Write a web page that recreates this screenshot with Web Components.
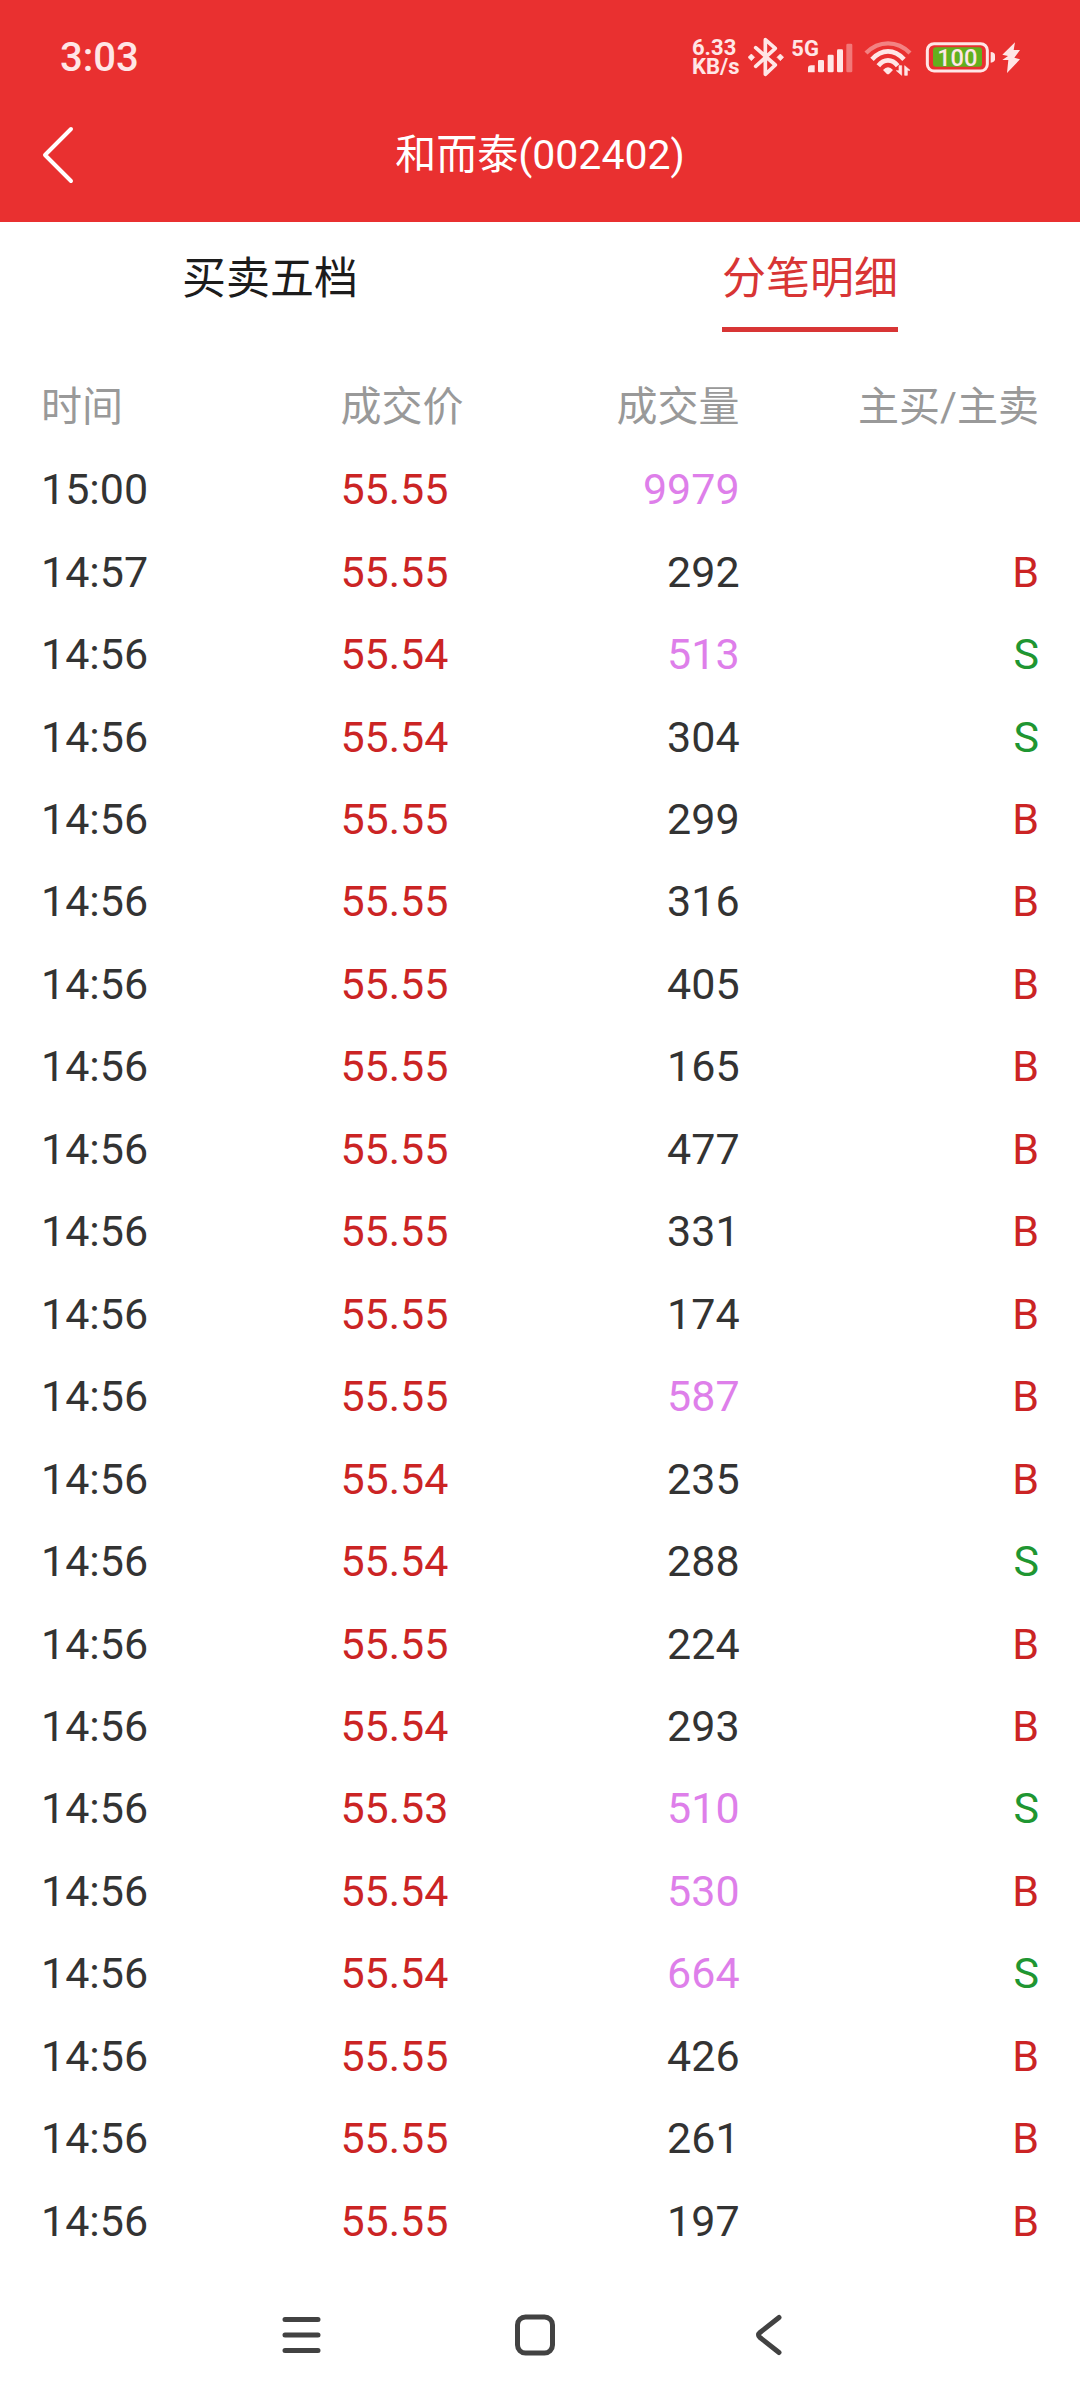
<!DOCTYPE html>
<html lang="zh-CN">
<head>
<meta charset="UTF-8">
<meta name="viewport" content="width=device-width, initial-scale=1.0">
<title>和而泰(002402)</title>
<style>
    body {
        margin: 0;
        min-height: 100vh;
        display: flex;
        flex-direction: column;
        background: #fff;
        color: #333;
        font-family: Roboto, "Noto Sans CJK SC", sans-serif;
        --brand: #e93030;
    }
    trade-table {
        flex: 1;
    }
</style>
</head>
<body>
    <status-bar time="3:03"></status-bar>
    <page-header>和而泰(002402)</page-header>
    <tab-bar>
        <tab-item>买卖五档</tab-item>
        <tab-item selected>分笔明细</tab-item>
    </tab-bar>
    <trade-table></trade-table>
    <nav-bar></nav-bar>

<script>
class StatusBar extends HTMLElement {
    connectedCallback() {
        this.attachShadow({ mode: 'open' });
        this.shadowRoot.innerHTML = `
            <style>
                :host {
                    display: flex;
                    justify-content: space-between;
                    align-items: center;
                    height: 60px;
                    padding: 27px 60px 0;
                    background: var(--brand);
                    color: #ffe6e6;
                }
                .time {
                    padding-top: 2px;
                    font-size: 40px;
                    line-height: 48px;
                    font-weight: 500;
                }
                .icons {
                    display: flex;
                    align-items: center;
                    gap: 8px;
                }
                .speed {
                    width: 48px;
                    font-size: 22px;
                    line-height: 19px;
                    font-weight: 700;
                    white-space: nowrap;
                }
                svg {
                    display: block;
                    height: 40px;
                    fill: currentColor;
                }
                .line {
                    fill: none;
                    stroke: currentColor;
                }
            </style>
            <span class="time">${this.getAttribute('time')}</span>
            <div class="icons">
                <div class="speed">6.33<br>KB/s</div>
                <svg viewBox="204 50 108 120" width="36">
                    <path class="line" stroke-width="11" stroke-linejoin="round" stroke-linecap="round" d="M227 82 L286 134 L256 162 V58 L286 84 L227 138"/>
                    <path d="M214 101 l10 10 -10 10 -10 -10z M301 101 l10 10 -10 10 -10 -10z" stroke="currentColor" stroke-width="2" stroke-linejoin="round"/>
                </svg>
                <svg viewBox="336 50 192 120" width="64">
                    <text x="334" y="106" font-size="66" font-weight="700">5G</text>
                    <path d="M384 156 V144 Q384 135 394 135 H404 V156z"/>
                    <rect x="414" y="119" width="18" height="37" rx="4"/>
                    <rect x="443" y="103" width="18" height="53" rx="4"/>
                    <rect x="471" y="87" width="18" height="69" rx="4"/>
                    <rect x="499" y="70" width="18" height="86" rx="4" opacity="0.4"/>
                </svg>
                <svg viewBox="552 50 156 120" width="52">
                    <path class="line" stroke-width="13" opacity="0.45" d="M558 98 Q587 69 624 69 Q661 69 690 98"/>
                    <path class="line" stroke-width="14" d="M576 117 Q598 93 624 93 Q650 93 672 117"/>
                    <path class="line" stroke-width="14" d="M595 136 Q608 120 624 120 Q640 120 653 136"/>
                    <path d="M609 149 Q624 133 639 149 L628 160 Q624 164 620 160z"/>
                    <path d="M657 136 H665 V165 L649 151 H657z M674 165 V136 L690 150 H682 V165z" stroke="currentColor" stroke-width="2"/>
                </svg>
                <svg viewBox="732 50 288 120" width="96">
                    <rect class="line" x="742" y="70" width="180" height="82" rx="20" stroke-width="9"/>
                    <rect x="759" y="81" width="147" height="58" rx="9" fill="#62b01e"/>
                    <path d="M932 95 Q945 96 945 105 V117 Q945 126 932 127z"/>
                    <text x="832" y="136" font-size="71" font-weight="500" text-anchor="middle">100</text>
                    <path d="M1005 66 L967 103 L984 107 L967 119 H985 L981 158 L1020 117 L1003 112 L1020 89 H1001z"/>
                </svg>
            </div>
        `;
    }
}

class PageHeader extends HTMLElement {
    connectedCallback() {
        this.attachShadow({ mode: 'open' });
        this.shadowRoot.innerHTML = `
            <style>
                :host {
                    display: grid;
                    grid-template-columns: 116px 1fr 116px;
                    align-items: center;
                    height: 135px;
                    background: var(--brand);
                    color: #fff;
                }
                button {
                    display: flex;
                    align-items: center;
                    height: 100%;
                    padding: 0 0 0 42px;
                    border: 0;
                    background: none;
                    color: inherit;
                }
                h1 {
                    margin: 0;
                    font-size: 41px;
                    line-height: 48px;
                    font-weight: 400;
                    text-align: center;
                }
            </style>
            <button type="button" aria-label="返回">
                <svg width="32" height="58" viewBox="0 0 32 58" fill="none" stroke="currentColor" stroke-width="4" stroke-linecap="round" stroke-linejoin="round"><path d="M29 3 L3 29 L29 55"/></svg>
            </button>
            <h1><slot></slot></h1>
        `;
    }
}

class TabBar extends HTMLElement {
    connectedCallback() {
        this.attachShadow({ mode: 'open' });
        this.shadowRoot.innerHTML = `
            <style>
                :host {
                    display: flex;
                    height: 110px;
                }
            </style>
            <slot></slot>
        `;
    }
}

class TabItem extends HTMLElement {
    connectedCallback() {
        const selected = this.hasAttribute('selected');
        this.attachShadow({ mode: 'open' });
        this.shadowRoot.innerHTML = `
            <style>
                :host {
                    flex: 1;
                    display: flex;
                    justify-content: center;
                }
                button {
                    padding: 0;
                    border: 0;
                    border-bottom: 5px solid transparent;
                    background: none;
                    color: #1c1c1c;
                    font: inherit;
                    font-size: 44px;
                }
                button[aria-pressed="true"] {
                    color: #d83535;
                    border-color: #d83535;
                }
            </style>
            <button type="button" aria-pressed="${selected}"><slot></slot></button>
        `;
    }
}

const TRADES = [
    ['15:00', '55.55', 9979, ''],
    ['14:57', '55.55', 292, 'B'],
    ['14:56', '55.54', 513, 'S'],
    ['14:56', '55.54', 304, 'S'],
    ['14:56', '55.55', 299, 'B'],
    ['14:56', '55.55', 316, 'B'],
    ['14:56', '55.55', 405, 'B'],
    ['14:56', '55.55', 165, 'B'],
    ['14:56', '55.55', 477, 'B'],
    ['14:56', '55.55', 331, 'B'],
    ['14:56', '55.55', 174, 'B'],
    ['14:56', '55.55', 587, 'B'],
    ['14:56', '55.54', 235, 'B'],
    ['14:56', '55.54', 288, 'S'],
    ['14:56', '55.55', 224, 'B'],
    ['14:56', '55.54', 293, 'B'],
    ['14:56', '55.53', 510, 'S'],
    ['14:56', '55.54', 530, 'B'],
    ['14:56', '55.54', 664, 'S'],
    ['14:56', '55.55', 426, 'B'],
    ['14:56', '55.55', 261, 'B'],
    ['14:56', '55.55', 197, 'B']
];

// orders of this size and up are shown in purple
const BIG_ORDER = 500;

class TradeTable extends HTMLElement {
    connectedCallback() {
        const rows = TRADES.map(([time, price, volume, side]) => `
            <tr>
                <td>${time}</td>
                <td class="price">${price}</td>
                <td class="${volume >= BIG_ORDER ? 'big' : ''}">${volume}</td>
                <td class="${side === 'S' ? 'sell' : 'buy'}">${side}</td>
            </tr>`).join('');

        this.attachShadow({ mode: 'open' });
        this.shadowRoot.innerHTML = `
            <style>
                :host {
                    display: flex;
                    padding: 33px 41px 0;
                }
                table {
                    width: 100%;
                    table-layout: fixed;
                    border-collapse: collapse;
                }
                th, td {
                    padding: 0;
                    text-align: left;
                    line-height: 48px;
                    white-space: nowrap;
                }
                th {
                    height: 83px;
                    color: #999;
                    font-size: 41px;
                    font-weight: 400;
                }
                td {
                    font-size: 43px;
                }
                th:nth-child(1), th:nth-child(4) {
                    width: 30%;
                }
                th:nth-child(n+3), td:nth-child(n+3) {
                    text-align: right;
                }
                .price, .buy {
                    color: #cb2424;
                }
                .sell {
                    color: #1f9632;
                }
                .big {
                    color: #de7fea;
                }
            </style>
            <table>
                <thead>
                    <tr><th>时间</th><th>成交价</th><th>成交量</th><th>主买/主卖</th></tr>
                </thead>
                <tbody>${rows}</tbody>
            </table>
        `;
    }
}

class NavBar extends HTMLElement {
    connectedCallback() {
        this.attachShadow({ mode: 'open' });
        this.shadowRoot.innerHTML = `
            <style>
                :host {
                    display: flex;
                    height: 130px;
                    padding: 8px 18% 0 17%;
                }
                button {
                    flex: 1;
                    display: flex;
                    justify-content: center;
                    align-items: center;
                    padding: 0;
                    border: 0;
                    background: none;
                    color: #424242;
                }
                svg {
                    fill: none;
                    stroke: currentColor;
                    stroke-width: 5;
                    stroke-linecap: round;
                    stroke-linejoin: round;
                }
            </style>
            <button type="button" aria-label="最近任务">
                <svg width="44" height="44" viewBox="0 0 44 44"><path d="M6 6.5H39M6 22H39M6 37.5H39"/></svg>
            </button>
            <button type="button" aria-label="主屏幕">
                <svg width="44" height="44" viewBox="0 0 44 44"><rect x="4.5" y="4" width="35" height="36" rx="8"/></svg>
            </button>
            <button type="button" aria-label="返回">
                <svg width="44" height="44" viewBox="0 0 44 44"><path d="M32 4.5 L13 19.5 Q10 22 13 24.5 L32 39.5"/></svg>
            </button>
        `;
    }
}

customElements.define('status-bar', StatusBar);
customElements.define('page-header', PageHeader);
customElements.define('tab-bar', TabBar);
customElements.define('tab-item', TabItem);
customElements.define('trade-table', TradeTable);
customElements.define('nav-bar', NavBar);
</script>
</body>
</html>
